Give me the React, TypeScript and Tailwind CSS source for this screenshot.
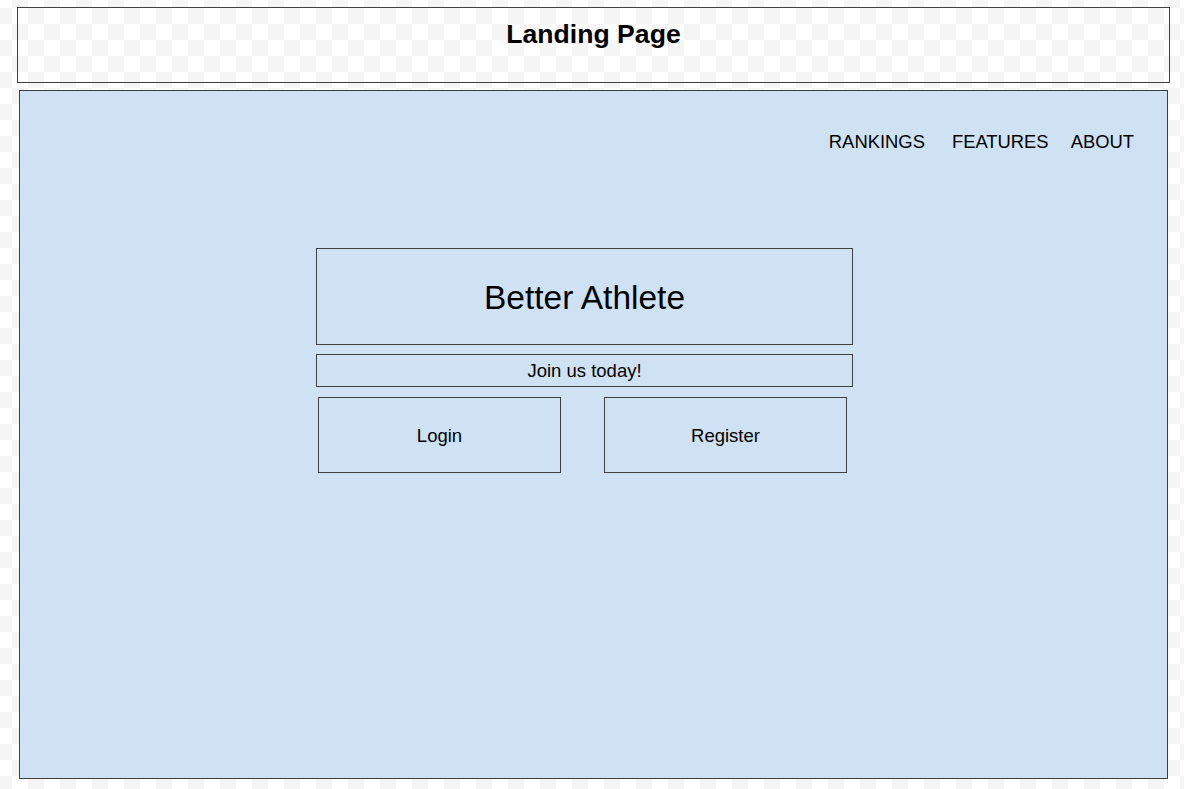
const navItems = [
  { label: "RANKINGS", className: "" },
  { label: "FEATURES", className: "ml-[27px]" },
  { label: "ABOUT", className: "ml-[22px]" },
];

export default function App() {
  return (
    <div className="h-[789px] w-full overflow-hidden bg-white bg-[image:conic-gradient(#f5f5f5_25%,#ffffff_0_50%,#f5f5f5_0_75%,#ffffff_0)] bg-[length:32px_32px] bg-[position:12px_8px] pt-[7px] font-['Liberation_Sans',Arial,sans-serif] text-black">
      {/* header frame */}
      <div className="ml-[17px] h-[76px] w-[1153px] border border-[#404040] pt-[13px] text-center">
        <h1 className="text-[26.6px] font-bold leading-none">Landing Page</h1>
      </div>

      {/* page mock */}
      <div className="ml-[19px] mt-[7px] h-[689px] w-[1149px] border border-[#404040] bg-[#cfe2f3]">
        <nav className="flex h-[157px] justify-end pr-[33px] pt-[42px] text-[18.4px] leading-none">
          {navItems.map((item) => (
            <span key={item.label} className={item.className}>
              {item.label}
            </span>
          ))}
        </nav>

        <div className="ml-[296px] w-[537px]">
          <div className="flex h-[97px] items-center justify-center border border-[#404040] pt-[2px] text-[33.5px] leading-none">
            Better Athlete
          </div>
          <div className="mt-[9px] flex h-[33px] items-center justify-center border border-[#404040] pt-[2px] text-[18.5px] leading-none">
            Join us today!
          </div>
          <div className="mt-[10px] flex pl-[2px]">
            <div className="flex h-[76px] w-[243px] items-center justify-center border border-[#404040] pt-[2px] text-[18.5px] leading-none">
              Login
            </div>
            <div className="ml-[43px] flex h-[76px] w-[243px] items-center justify-center border border-[#404040] pt-[2px] text-[18.5px] leading-none">
              Register
            </div>
          </div>
        </div>
      </div>
    </div>
  );
}
